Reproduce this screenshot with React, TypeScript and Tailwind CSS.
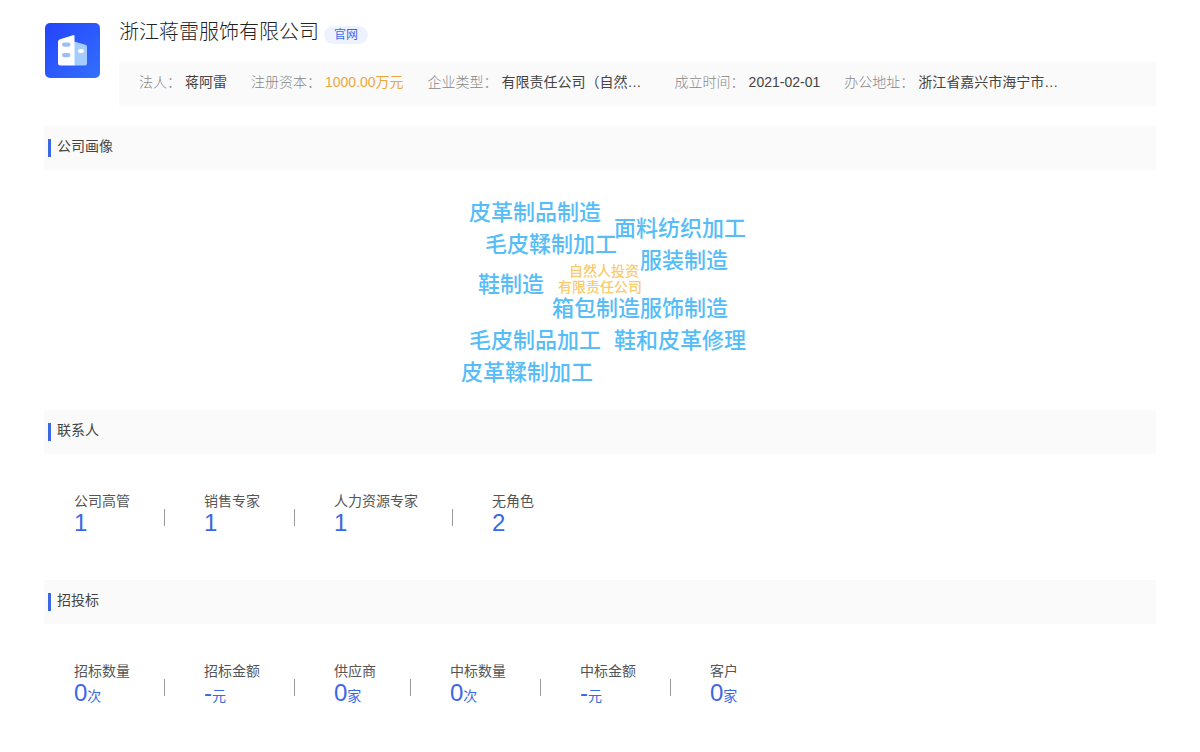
const company = {
  name: '浙江蒋雷服饰有限公司',
  info: [
    { label: '法人', value: '蒋阿雷' },
    { label: '注册资本', value: '1000.00万元', highlight: true },
    { label: '企业类型', value: '有限责任公司（自然…', wide: true },
    { label: '成立时间', value: '2021-02-01' },
    { label: '办公地址', value: '浙江省嘉兴市海宁市…', wide: true }
  ]
}

// x / y are the centre of each word, measured from the centre of the cloud
const words = [
  { text: '皮革制品制造', x: -65, y: -77 },
  { text: '面料纺织加工', x: 80, y: -61 },
  { text: '毛皮鞣制加工', x: -49, y: -45 },
  { text: '服装制造', x: 84, y: -29 },
  { text: '自然人投资', x: 4, y: -19, small: true },
  { text: '有限责任公司', x: 0, y: -3, small: true },
  { text: '鞋制造', x: -89, y: -5 },
  { text: '箱包制造', x: -4, y: 19 },
  { text: '服饰制造', x: 84, y: 19 },
  { text: '毛皮制品加工', x: -65, y: 51 },
  { text: '鞋和皮革修理', x: 80, y: 51 },
  { text: '皮革鞣制加工', x: -73, y: 83 }
]

const contacts = [
  { label: '公司高管', value: '1' },
  { label: '销售专家', value: '1' },
  { label: '人力资源专家', value: '1' },
  { label: '无角色', value: '2' }
]

const bidding = [
  { label: '招标数量', value: '0', unit: '次' },
  { label: '招标金额', value: '-', unit: '元' },
  { label: '供应商', value: '0', unit: '家' },
  { label: '中标数量', value: '0', unit: '次' },
  { label: '中标金额', value: '-', unit: '元' },
  { label: '客户', value: '0', unit: '家' }
]

type Stat = { label: string; value: string; unit?: string }

function CompanyLogo() {
  return (
    <svg viewBox="0 0 55 55" className="mt-px h-[55px] w-[55px] shrink-0" aria-hidden="true">
      <defs>
        <linearGradient id="logo-bg" x1="0" y1="0" x2="1" y2="1">
          <stop offset="0" stopColor="#2443fb" />
          <stop offset="1" stopColor="#3270ff" />
        </linearGradient>
      </defs>
      <rect width="55" height="55" rx="5" fill="url(#logo-bg)" />
      <path d="M29 18.5 L40.5 21.8 Q42 22.3 42 24 V40.5 Q42 42.5 40 42.5 H29 Z" fill="#a4ccfd" />
      <path d="M15 16.3 L28 12.2 Q29.5 11.8 29.5 13.3 V42.5 H15.5 Q13 42.5 13 40 V18.8 Q13 17 15 16.3 Z" fill="#fff" />
      <rect x="17" y="19.5" width="8.5" height="4.2" rx="2.1" fill="#9dbdf8" />
      <rect x="17" y="30" width="8.5" height="4.2" rx="2.1" fill="#9dbdf8" />
      <rect x="33" y="26" width="6" height="4" rx="2" fill="#fff" />
    </svg>
  )
}

function SectionTitle({ title }: { title: string }) {
  return (
    <div className="flex h-11 items-center bg-[#fafafa] pl-1">
      <span className="h-[18px] w-[3px] bg-[#3a68e4]" />
      <h2 className="pb-1 pl-1.5 text-sm">{title}</h2>
    </div>
  )
}

function StatList({ items }: { items: Stat[] }) {
  return (
    <dl className="flex px-[30px] pt-9 pb-11">
      {items.map((item, index) => (
        <div key={item.label} className="flex items-start">
          {index > 0 && <span className="mt-[19px] mr-[39px] ml-[34px] h-[17px] w-px bg-[#999]" />}
          <div>
            <dt className="text-sm leading-[22px] text-[#555]">{item.label}</dt>
            <dd className="pb-0.5 text-2xl leading-[22px] text-[#3a68e4]">
              {item.value}
              {item.unit && <span className="text-sm leading-[22px]">{item.unit}</span>}
            </dd>
          </div>
        </div>
      ))}
    </dl>
  )
}

export default function App() {
  return (
    <main className="min-h-screen bg-white px-11 pt-[22px] font-['Liberation_Sans','Noto_Sans_CJK_SC',sans-serif] text-[#444]">
      <header className="flex gap-[19px] pl-px">
        <CompanyLogo />
        <div className="min-w-0 flex-1">
          <div className="-mt-1 flex h-11 items-start gap-[5px]">
            <h1 className="text-xl leading-7 font-light text-[#222]">{company.name}</h1>
            <a
              href="#"
              className="mt-2 rounded-full bg-[#edf3fe] px-2.5 text-xs leading-[18px] text-[#3a68e4]"
            >
              官网
            </a>
          </div>
          <dl className="flex h-11 items-center gap-6 bg-[#fafafa] pb-1 pl-5 text-sm whitespace-nowrap">
            {company.info.map((item) => (
              <div key={item.label} className="flex gap-1">
                <dt className="font-light text-[#888]">{item.label}：</dt>
                <dd
                  className={`${item.wide ? 'w-[149px]' : ''} ${item.highlight ? 'text-[#f0a63c]' : 'text-[#444]'}`}
                >
                  {item.value}
                </dd>
              </div>
            ))}
          </dl>
        </div>
      </header>

      <section className="mt-5">
        <SectionTitle title="公司画像" />
        <div className="relative h-60">
          {words.map((word) => (
            <span
              key={word.text}
              className={`absolute top-1/2 left-1/2 -translate-x-1/2 -translate-y-1/2 font-medium whitespace-nowrap ${
                word.small ? 'text-sm text-[#f9cb6b]' : 'text-[22px] leading-8 text-[#56bdf8]'
              }`}
              style={{ marginLeft: word.x, marginTop: word.y }}
            >
              {word.text}
            </span>
          ))}
        </div>
      </section>

      <section>
        <SectionTitle title="联系人" />
        <StatList items={contacts} />
      </section>

      <section>
        <SectionTitle title="招投标" />
        <StatList items={bidding} />
      </section>
    </main>
  )
}
